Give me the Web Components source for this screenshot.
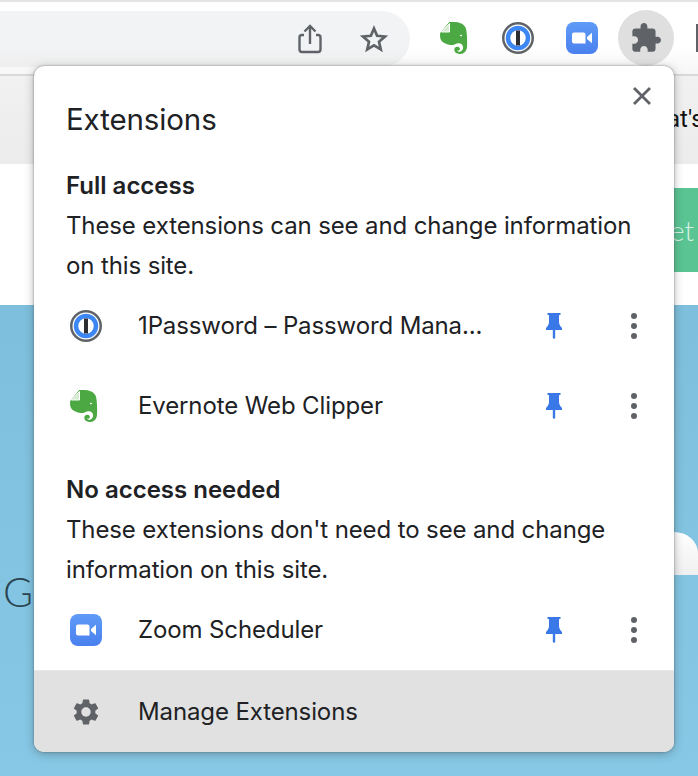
<!DOCTYPE html>
<html>
<head>
<meta charset="utf-8">
<title>Extensions</title>
<style>
  html, body { margin: 0; height: 100%; }
  body {
    width: 698px;
    height: 776px;
    overflow: hidden;
    position: relative;
    font-family: Inter, "Liberation Sans", sans-serif;
    color: #202124;
  }
</style>
</head>
<body>
  <browser-toolbar></browser-toolbar>
  <page-backdrop></page-backdrop>
  <extensions-popup>
    <ext-section heading="Full access" text="These extensions can see and change information on this site.">
      <ext-row icon="onepassword" label="1Password – Password Mana..."></ext-row>
      <ext-row icon="evernote" label="Evernote Web Clipper"></ext-row>
    </ext-section>
    <ext-section heading="No access needed" text="These extensions don't need to see and change information on this site.">
      <ext-row icon="zoom" label="Zoom Scheduler"></ext-row>
    </ext-section>
  </extensions-popup>

<script>
const ICONS = {
  share: `<svg viewBox="0 0 24 30" width="24" height="30"><path d="M6 11H4A2.5 2.5 0 0 0 1.5 13.5V25.5A2.5 2.5 0 0 0 4 28H20A2.5 2.5 0 0 0 22.5 25.5V13.5A2.5 2.5 0 0 0 20 11H18M12 20V2.5M6.5 7.5L12 2l5.5 5.5" fill="none" stroke="#5f6368" stroke-width="2.4"/></svg>`,
  star: `<svg viewBox="0 0 28 28" width="28" height="28"><path d="M14 3.5l3.1 7.3 7.9.7-6 5.200 1.800 7.700L14 20.300l-6.800 4.100L9 16.700 3 11.500l7.900-.7z" fill="none" stroke="#5f6368" stroke-width="2.7" stroke-linejoin="miter"/></svg>`,
  evernote: `<svg viewBox="0 0 28 32" width="28" height="32"><path d="M9.3 0C12-.2 17-.2 20 1 23.5 2.2 25.800 4.500 26.300 8 27 13 27.400 19 27 25 26.700 29 24 31.800 20.500 32 17 32.200 14.500 30.500 14.300 28 14.200 26 15.800 24.600 17.500 24.800 19.300 25 20.200 26.400 19.800 27.600 19.400 28.700 18 29 17 28.300 17.400 29.500 18.700 30 20 29.700 22.300 29.200 23.300 27 23.100 25 22.900 22.800 21 21.500 18.800 21.300 17 21.100 15.500 22 14 22.800 12 23.500 8.500 22.800 5.500 21.500 2.500 20.200.5 18.500.2 15.500 0 14 0 12.500.2 11z" fill="#4ca843"/><path d="M9.5 1.500V10H1.500z" fill="#d4ebcf" stroke="#fff" stroke-width="1"/><ellipse cx="21" cy="13.500" rx="1.200" ry=".7" fill="#fff"/></svg>`,
  onepassword: `<svg viewBox="0 0 32 32" width="32" height="32"><circle cx="16" cy="16" r="14.75" fill="#fff" stroke="#5f6368" stroke-width="2.5"/><circle cx="16" cy="16" r="10" fill="#fff" stroke="#3d87f5" stroke-width="4.5"/><rect x="14" y="8.500" width="4" height="15" fill="#2c2e33"/></svg>`,
  zoom: `<svg viewBox="0 0 32 32" width="32" height="32"><defs><linearGradient id="z" x1="0" y1="0" x2="0" y2="1"><stop offset="0" stop-color="#5f9bf7"/><stop offset="1" stop-color="#4a80ee"/></linearGradient></defs><rect width="32" height="32" rx="8" fill="url(#z)"/><path d="M6 12.500A2 2 0 0 1 8 10.500H17.500A2 2 0 0 1 19.500 12.500V21.500H8A2 2 0 0 1 6 19.500z" fill="#fff"/><path d="M21 15L26 10.800V21.200L21 17z" fill="#fff"/></svg>`,
  puzzle: `<svg viewBox="1 1 22 22" width="30" height="30"><path fill="#5f6368" d="M20.500 11H19V7c0-1.100-.9-2-2-2h-4V3.500C13 2.120 11.880 1 10.500 1S8 2.120 8 3.500V5H4c-1.100 0-1.990.9-1.990 2v3.800H3.500c1.490 0 2.700 1.210 2.700 2.700s-1.210 2.700-2.700 2.700H2V20c0 1.100.9 2 2 2h3.800v-1.500c0-1.490 1.210-2.700 2.700-2.700 1.490 0 2.700 1.210 2.700 2.700V22H17c1.100 0 2-.9 2-2v-4h1.500c1.380 0 2.500-1.120 2.500-2.500S21.880 11 20.500 11z"/></svg>`,
  close: `<svg viewBox="0 0 20 20" width="20" height="20"><path d="M2 2L18 18M18 2L2 18" stroke="#5f6368" stroke-width="2.8" fill="none"/></svg>`,
  pin: `<svg viewBox="0 0 16 26" width="16" height="26"><path fill="#3b78e7" d="M1.500 0H14.500V2H13V9C13 12 15 14 16 15V17H9.200V25L8 26 6.800 25V17H0V15C1 14 3 12 3 9V2H1.500z"/></svg>`,
  dots: `<svg viewBox="0 0 6 26" width="6" height="26"><circle cx="3" cy="3" r="3" fill="#5f6368"/><circle cx="3" cy="13" r="3" fill="#5f6368"/><circle cx="3" cy="23" r="3" fill="#5f6368"/></svg>`,
  gear: `<svg viewBox="2 2 20 20" width="26" height="26"><path fill="#5f6368" d="M19.140 12.940c.04-.3.060-.61.060-.94 0-.32-.02-.64-.07-.94l2.030-1.580c.18-.14.230-.41.120-.61l-1.920-3.320c-.12-.22-.37-.29-.59-.22l-2.390.96c-.5-.38-1.030-.7-1.620-.94l-.36-2.540c-.04-.24-.24-.41-.48-.41h-3.840c-.24 0-.43.170-.47.410l-.36 2.540c-.59.240-1.130.570-1.620.94l-2.390-.96c-.22-.08-.47 0-.59.220L2.740 8.870c-.12.210-.08.470.12.610l2.030 1.580c-.05.3-.09.630-.09.940s.02.640.07.940l-2.030 1.580c-.18.140-.23.410-.12.610l1.920 3.320c.12.220.37.290.59.220l2.390-.96c.5.380 1.030.7 1.620.94l.36 2.540c.05.240.24.410.48.410h3.840c.24 0 .44-.17.470-.41l.36-2.540c.59-.24 1.130-.56 1.620-.94l2.390.96c.22.080.47 0 .59-.22l1.920-3.320c.12-.22.070-.47-.12-.61l-2.010-1.580zM12 15.600c-1.980 0-3.600-1.620-3.600-3.600s1.620-3.600 3.600-3.600 3.600 1.620 3.600 3.600-1.620 3.600-3.600 3.600z"/></svg>`
};

class ExtIcon extends HTMLElement {
  connectedCallback() {
    if (this.shadowRoot) return;
    this.attachShadow({ mode: 'open' });
    this.shadowRoot.innerHTML = `
      <style>
        :host { display: inline-flex; align-items: center; justify-content: center; }
        svg { display: block; }
      </style>
      ${ICONS[this.getAttribute('name')]}
    `;
  }
}

class BrowserToolbar extends HTMLElement {
  constructor() {
    super();
    this.attachShadow({ mode: 'open' });
    this.shadowRoot.innerHTML = `
      <style>
        :host {
          display: flex;
          align-items: center;
          height: 72px;
          border-top: 2px solid #e4e4e6;
          border-bottom: 2px solid #d9d9db;
          background: linear-gradient(#fff 60%, #f6f6f6);
        }
        .omnibox {
          flex: none;
          width: 410px;
          height: 56px;
          margin-top: 1px;
          box-sizing: border-box;
          padding-right: 22px;
          background: linear-gradient(#f2f3f5 60%, #eeeeee);
          border-radius: 0 28px 28px 0;
          display: flex;
          justify-content: flex-end;
          align-items: center;
          gap: 38px;
        }
        .actions {
          flex: none;
          display: flex;
          align-items: center;
          margin-left: 28px;
        }
        .actions ext-icon { width: 32px; }
        .actions ext-icon + ext-icon { margin-left: 32px; }
        .actions ext-icon.puzzle {
          width: 56px;
          height: 56px;
          margin-left: 20px;
          border-radius: 50%;
          background: #dfdfdf;
        }
        .edge {
          flex: none;
          width: 4px;
          height: 28px;
          margin-left: 22px;
          background: #5f6368;
        }
      </style>
      <div class="omnibox">
        <ext-icon name="share"></ext-icon>
        <ext-icon name="star"></ext-icon>
      </div>
      <div class="actions">
        <ext-icon name="evernote"></ext-icon>
        <ext-icon name="onepassword"></ext-icon>
        <ext-icon name="zoom"></ext-icon>
        <ext-icon class="puzzle" name="puzzle"></ext-icon>
      </div>
      <div class="edge"></div>
    `;
  }
}

class PageBackdrop extends HTMLElement {
  constructor() {
    super();
    this.attachShadow({ mode: 'open' });
    this.shadowRoot.innerHTML = `
      <style>
        :host { display: block; font-family: Lato, Roboto, sans-serif; }
        .nav {
          height: 88px;
          background: linear-gradient(#f1f1f1, #ececec);
          display: flex;
          justify-content: flex-end;
          align-items: center;
          padding-bottom: 2px;
          box-sizing: border-box;
          font: 24px Roboto, sans-serif;
          color: #111;
          white-space: nowrap;
        }
        .nav span { width: 24px; overflow: hidden; text-indent: -7px; }
        .hero {
          height: 141px;
          background: #fff;
          display: flex;
          justify-content: flex-end;
          align-items: flex-start;
          padding-top: 24px;
          box-sizing: border-box;
        }
        .cta {
          width: 24px;
          height: 84px;
          background: #5ac493;
          color: #d8f2e5;
          font-weight: 300;
          font-size: 28px;
          line-height: 84px;
          white-space: nowrap;
          text-indent: -4px;
        }
        .sky {
          height: 471px;
          background: linear-gradient(#7dbfdc, #86c8e6);
          position: relative;
          display: flex;
          flex-direction: column;
          align-items: flex-end;
          padding-top: 227px;
          box-sizing: border-box;
        }
        .cloud {
          width: 24px;
          height: 43px;
          background: linear-gradient(#fff, #efefef);
          border-top-right-radius: 24px 21px;
        }
        .word {
          position: absolute;
          left: 3px;
          top: 262px;
          font-size: 41px;
          font-weight: 300;
          line-height: 50px;
          color: #2b4450;
        }
      </style>
      <div class="nav"><span>at's</span></div>
      <div class="hero"><div class="cta">et</div></div>
      <div class="sky"><div class="cloud"></div><div class="word">G</div></div>
    `;
  }
}

class ExtensionsPopup extends HTMLElement {
  constructor() {
    super();
    this.attachShadow({ mode: 'open' });
    this.shadowRoot.innerHTML = `
      <style>
        :host {
          display: block;
          position: absolute;
          left: 34px;
          top: 66px;
          width: 640px;
          height: 686px;
          background: #fff;
          border-radius: 10px;
          overflow: hidden;
          box-shadow: 0 0 2px rgba(60,64,67,.6), 0 2px 10px rgba(60,64,67,.4);
          font-family: Inter, "Liberation Sans", sans-serif;
          color: #202124;
          letter-spacing: -0.12px;
        }
        .title {
          font-size: 29.5px;
          line-height: 40px;
          padding: 33px 32px 0;
          margin-bottom: 27px;
          font-weight: 400;
        }
        .close {
          position: absolute;
          left: 598px;
          top: 20px;
        }
        .footer {
          display: flex;
          align-items: center;
          height: 82px;
          box-sizing: border-box;
          border-top: 1px solid #e8e8e8;
          background: #e1e1e1;
          font-size: 24px;
        }
        .footer ext-icon { width: 104px; }
      </style>
      <div class="title">Extensions</div>
      <ext-icon class="close" name="close"></ext-icon>
      <slot></slot>
      <div class="footer">
        <ext-icon name="gear"></ext-icon>
        <span>Manage Extensions</span>
      </div>
    `;
  }
}

class ExtSection extends HTMLElement {
  constructor() {
    super();
    this.attachShadow({ mode: 'open' });
    this.shadowRoot.innerHTML = `
      <style>
        :host { display: block; font-size: 24px; line-height: 40px; }
        :host(:not(:first-child)) { margin-top: 24px; }
        .head { padding: 0 32px; font-weight: 600; letter-spacing: 0; }
        .text { padding: 0 32px; }
      </style>
      <div class="head"></div>
      <div class="text"></div>
      <slot></slot>
    `;
    this.shadowRoot.querySelector('.head').textContent = this.getAttribute('heading');
    this.shadowRoot.querySelector('.text').textContent = this.getAttribute('text');
  }
}

class ExtRow extends HTMLElement {
  constructor() {
    super();
    this.attachShadow({ mode: 'open' });
    this.shadowRoot.innerHTML = `
      <style>
        :host {
          display: grid;
          grid-template-columns: 104px 1fr 80px 80px;
          align-items: center;
          height: 80px;
          font-size: 24px;
        }
        .icon { justify-self: start; margin-left: 36px; }
        .label { white-space: nowrap; }
        .pin, .more { justify-self: center; }
      </style>
      <ext-icon class="icon" name="${this.getAttribute('icon')}"></ext-icon>
      <span class="label">${this.getAttribute('label')}</span>
      <ext-icon class="pin" name="pin"></ext-icon>
      <ext-icon class="more" name="dots"></ext-icon>
    `;
  }
}

customElements.define('ext-icon', ExtIcon);
customElements.define('browser-toolbar', BrowserToolbar);
customElements.define('page-backdrop', PageBackdrop);
customElements.define('extensions-popup', ExtensionsPopup);
customElements.define('ext-section', ExtSection);
customElements.define('ext-row', ExtRow);
</script>
</body>
</html>
